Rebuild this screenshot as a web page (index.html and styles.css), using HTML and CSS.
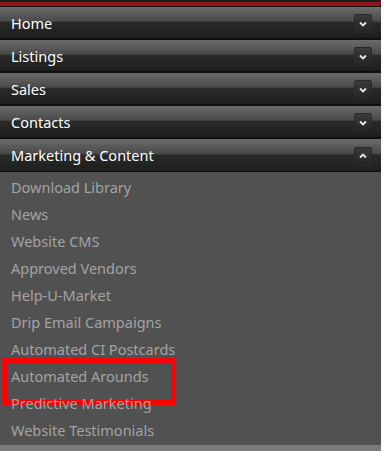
FILE: index.html
```html
<!DOCTYPE html>
<html>
<head>
<meta charset="utf-8">
<link rel="stylesheet" href="styles.css">
</head>
<body>
<div class="nav">
  <div class="topbar"></div>
  <div class="head"><span>Home</span><span class="btn"><svg width="10" height="6" viewBox="0 0 10 6"><path d="M2 1.5 L5 4.5 L8 1.5" fill="none" stroke="#e6e6e6" stroke-width="1.8"/></svg></span></div>
  <div class="head"><span>Listings</span><span class="btn"><svg width="10" height="6" viewBox="0 0 10 6"><path d="M2 1.5 L5 4.5 L8 1.5" fill="none" stroke="#e6e6e6" stroke-width="1.8"/></svg></span></div>
  <div class="head"><span>Sales</span><span class="btn"><svg width="10" height="6" viewBox="0 0 10 6"><path d="M2 1.5 L5 4.5 L8 1.5" fill="none" stroke="#e6e6e6" stroke-width="1.8"/></svg></span></div>
  <div class="head"><span>Contacts</span><span class="btn"><svg width="10" height="6" viewBox="0 0 10 6"><path d="M2 1.5 L5 4.5 L8 1.5" fill="none" stroke="#e6e6e6" stroke-width="1.8"/></svg></span></div>
  <div class="head open"><span>Marketing &amp; Content</span><span class="btn"><svg width="10" height="6" viewBox="0 0 10 6"><path d="M2 4.5 L5 1.5 L8 4.5" fill="none" stroke="#e6e6e6" stroke-width="1.8"/></svg></span></div>
  <ul class="items">
    <li>Download Library</li>
    <li>News</li>
    <li>Website CMS</li>
    <li>Approved Vendors</li>
    <li>Help-U-Market</li>
    <li>Drip Email Campaigns</li>
    <li>Automated CI Postcards</li>
    <li class="hl">Automated Arounds<span class="mark"></span></li>
    <li>Predictive Marketing</li>
    <li>Website Testimonials</li>
  </ul>
  <div class="foot"></div>
</div>
</body>
</html>
```

FILE: styles.css
```css
html, body {
  margin: 0;
  padding: 0;
  background: #ffffff;
}
.nav {
  width: 381px;
  height: 451px;
  overflow: hidden;
  background: #515151;
  font-family: "Noto Sans", "Open Sans", sans-serif;
  display: flex;
  flex-direction: column;
}
.topbar {
  height: 2px;
  background: #1e1e1e;
  border-bottom: 4px solid #8e1420;
  flex: none;
}
.head {
  flex: none;
  height: 31px;
  border-top: 1px solid #111;
  border-bottom: 1px solid #0c0c0c;
  background: linear-gradient(to bottom, #6b6b6b 0%, #4a4a4a 45%, #2a2a2a 50%, #1e1e1e 100%);
  color: #ffffff;
  font-size: 14.5px;
  display: flex;
  align-items: center;
  justify-content: space-between;
  padding: 0 9px 0 11px;
}
.head.open { height: 32px; }
.btn {
  width: 16px;
  height: 17px;
  margin-top: 2px;
  border: 1px solid #2a2a2a;
  border-radius: 2px;
  background: linear-gradient(to bottom, #3a3a3a, #242424);
  display: flex;
  align-items: center;
  justify-content: center;
}
.items {
  list-style: none;
  margin: 0;
  padding: 2px 0 1px 0;
  flex: none;
}
.items li {
  height: 27px;
  line-height: 27px;
  padding-left: 11px;
  color: #a3a3a3;
  font-size: 14.5px;
  position: relative;
}
.mark {
  position: absolute;
  left: 2px;
  top: -5px;
  width: 164px;
  height: 37px;
  border: 5px solid #ff0000;
}
.foot {
  flex: 1;
  background: #7a7a7a;
}
```
